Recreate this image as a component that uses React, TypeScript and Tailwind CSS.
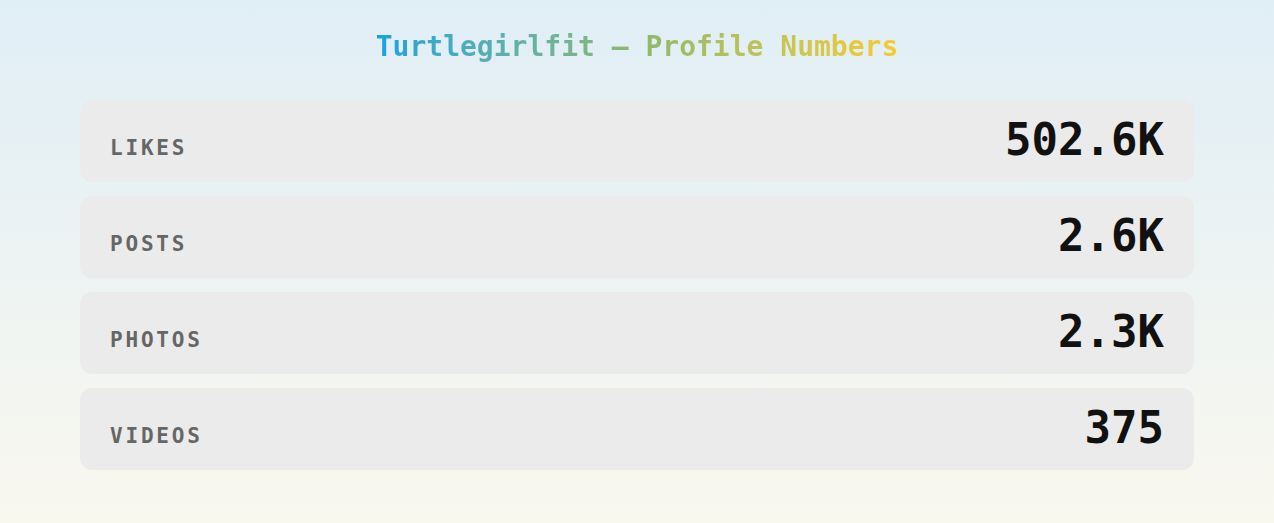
const stats = [
  { label: "Likes", value: "502.6K" },
  { label: "Posts", value: "2.6K" },
  { label: "Photos", value: "2.3K" },
  { label: "Videos", value: "375" },
];

export default function App() {
  return (
    <div className="min-h-[523px] w-full bg-gradient-to-b from-[#e0eef6] to-[#f9f8ef] px-20 pt-[31px] pb-10 font-['DejaVu_Sans_Mono',monospace]">
      <h1 className="text-center text-[28px] font-bold leading-8">
        <span className="bg-gradient-to-r from-[#12a2de] via-[#8cb86c] to-[#f6cc28] bg-clip-text text-transparent">
          Turtlegirlfit — Profile Numbers
        </span>
      </h1>
      <div className="mt-[37px] flex flex-col gap-[14px]">
        {stats.map((s) => (
          <div
            key={s.label}
            className="flex h-[82px] items-baseline justify-between rounded-xl bg-[#ebebeb] px-[30px] pt-[13px]"
          >
            <span className="text-[21px] font-bold uppercase tracking-[2.8px] text-[#666666]">
              {s.label}
            </span>
            <span className="text-[44px] font-bold leading-[54px] text-[#111111]">
              {s.value}
            </span>
          </div>
        ))}
      </div>
    </div>
  );
}
